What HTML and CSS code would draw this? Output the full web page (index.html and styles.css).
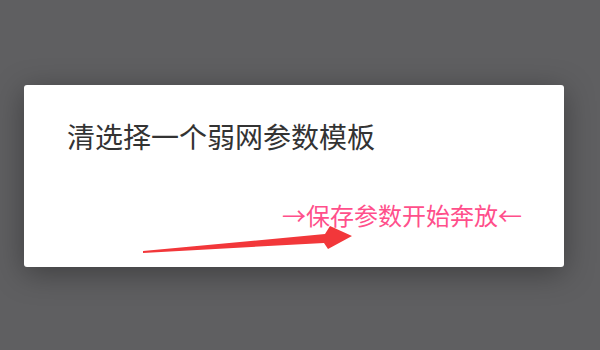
FILE: index.html
```html
<!DOCTYPE html>
<html lang="zh-CN">
<head>
    <meta charset="UTF-8">
    <meta name="viewport" content="width=device-width, initial-scale=1.0">
    <title>弱网参数</title>
    <link rel="stylesheet" href="styles.css">
</head>
<body>
    <div class="dialog">
        <h2 class="dialog-title">清选择一个弱网参数模板</h2>
        <div class="dialog-tip">→保存参数开始奔放←</div>
        <svg class="mark" viewBox="0 0 540 182" width="540" height="182">
            <polygon points="119,166 301,149 306,141 328,151 304,164 300,158 119,168" fill="#f2373a"/>
        </svg>
    </div>
</body>
</html>
```

FILE: styles.css
```css
body {
    margin: 0;
    height: 350px;
    background-color: #5f5f61;
    font-family: "Noto Sans CJK SC", "Noto Sans", sans-serif;
    padding: 85px 0 0 24px;
    box-sizing: border-box;
}
.dialog {
    position: relative;
    width: 540px;
    height: 182px;
    background-color: #fff;
    border-radius: 3px;
    box-shadow: 0 6px 30px rgba(0, 0, 0, 0.35);
    display: flex;
    flex-direction: column;
}
.dialog-title {
    margin: 0;
    padding: 34px 0 0 43px;
    font-size: 28px;
    font-weight: normal;
    line-height: 34px;
    color: #333;
}
.dialog-tip {
    margin-top: 48px;
    padding-right: 42px;
    text-align: right;
    font-size: 24px;
    line-height: 28px;
    color: #ff4f8b;
}
.mark {
    position: absolute;
    left: 0;
    top: 0;
}
```
